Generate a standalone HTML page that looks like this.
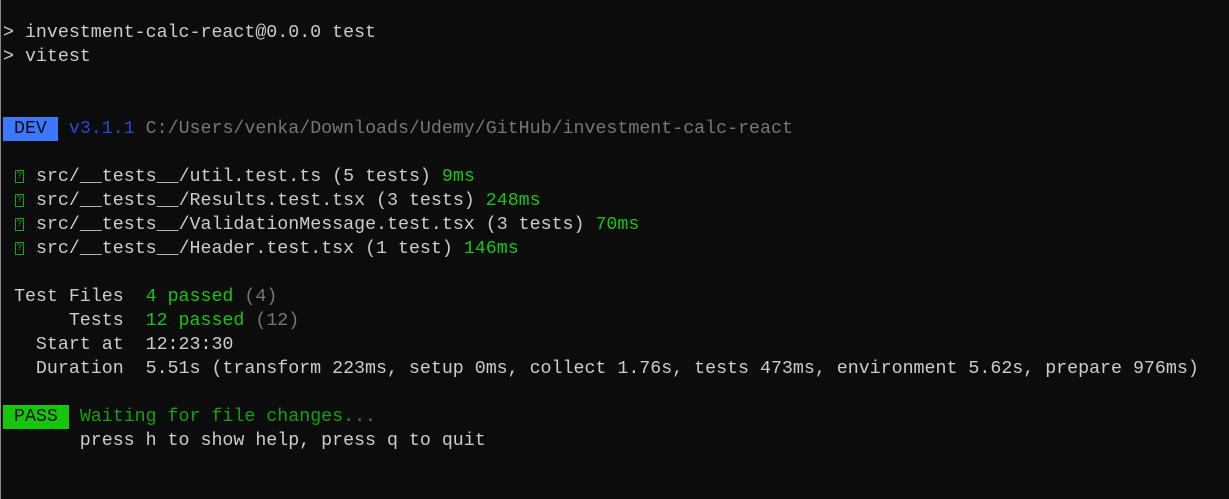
<!DOCTYPE html>
<html><head><style>
body{margin:0;background:#0c0c0c;width:1229px;height:499px;overflow:hidden;border-left:1px solid #888;box-sizing:border-box}
pre{margin:0;position:absolute;left:3px;top:21px;font-family:"Liberation Mono",monospace;font-size:18.3px;line-height:24px;color:#cccccc}
.g{color:#16c60c}.dg{color:#13a10e}.gr{color:#767676}.b{color:#1d4fd8}
.dev,.pass{display:inline-block;height:24px;line-height:24px;vertical-align:top}
.dev{background:#3b78ff;color:#0c0c0c}.pass{background:#16c60c;color:#0c0c0c}
.q{display:inline-block;width:9px;height:13px;border:1px solid #13a10e;color:#13a10e;font-size:10px;line-height:11px;text-align:center;box-sizing:border-box;vertical-align:top;margin:5px 1px 0}
</style></head><body><pre>&gt; investment-calc-react@0.0.0 test
&gt; vitest


<span class="dev"> DEV </span> <span class="b">v3.1.1</span> <span class="gr">C:/Users/venka/Downloads/Udemy/GitHub/investment-calc-react</span>

 <span class="q">?</span> src/__tests__/util.test.ts (5 tests) <span class="g">9ms</span>
 <span class="q">?</span> src/__tests__/Results.test.tsx (3 tests) <span class="g">248ms</span>
 <span class="q">?</span> src/__tests__/ValidationMessage.test.tsx (3 tests) <span class="g">70ms</span>
 <span class="q">?</span> src/__tests__/Header.test.tsx (1 test) <span class="g">146ms</span>

 Test Files  <span class="g">4 passed</span> <span class="gr">(4)</span>
      Tests  <span class="g">12 passed</span> <span class="gr">(12)</span>
   Start at  12:23:30
   Duration  5.51s (transform 223ms, setup 0ms, collect 1.76s, tests 473ms, environment 5.62s, prepare 976ms)

<span class="pass"> PASS </span> <span class="dg">Waiting for file changes...</span>
       press h to show help, press q to quit
</pre></body></html>
